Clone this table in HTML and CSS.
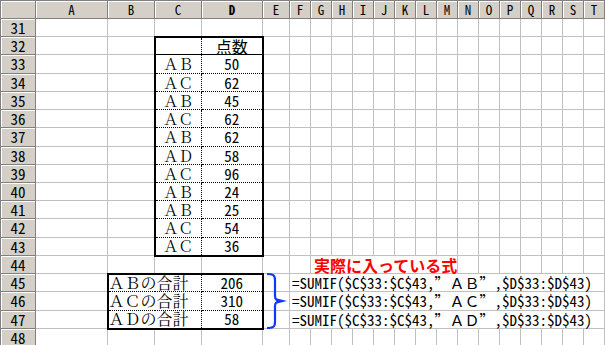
FILE: index.html
```html
<!DOCTYPE html>
<html lang="ja">
<head>
<meta charset="utf-8">
<title>SUMIF</title>
<link rel="stylesheet" href="styles.css">
</head>
<body>
<div class="wrap">
<table class="sheet">
<colgroup>
<col class="w-rh"><col class="w-a"><col class="w-b"><col class="w-c"><col class="w-d"><col class="w-e">
<col class="w-n"><col class="w-n"><col class="w-n"><col class="w-n"><col class="w-n"><col class="w-n"><col class="w-n"><col class="w-n"><col class="w-n"><col class="w-n"><col class="w-n"><col class="w-n"><col class="w-n"><col class="w-n"><col class="w-n">
</colgroup>
<tr class="hdr h18"><th></th><th>A</th><th>B</th><th>C</th><th class="sel">D</th><th>E</th><th>F</th><th>G</th><th>H</th><th>I</th><th>J</th><th>K</th><th>L</th><th>M</th><th>N</th><th>O</th><th>P</th><th>Q</th><th>R</th><th>S</th><th>T</th></tr>
<tr class="h18"><th class="rh">31</th><td></td><td></td><td></td><td></td><td></td><td></td><td></td><td></td><td></td><td></td><td></td><td></td><td></td><td></td><td></td><td></td><td></td><td></td><td></td><td></td></tr>
<tr class="h18"><th class="rh">32</th><td></td><td></td><td class="d bl bt sb"></td><td class="d br bt sb ctr kan">点数</td><td></td><td></td><td></td><td></td><td></td><td></td><td></td><td></td><td></td><td></td><td></td><td></td><td></td><td></td><td></td><td></td></tr>
<tr class="h19"><th class="rh">33</th><td></td><td></td><td class="d bl st ctr mc">ＡＢ</td><td class="d br st ctr">50</td><td></td><td></td><td></td><td></td><td></td><td></td><td></td><td></td><td></td><td></td><td></td><td></td><td></td><td></td><td></td><td></td></tr>
<tr class="h18"><th class="rh">34</th><td></td><td></td><td class="d bl ctr mc">ＡＣ</td><td class="d br ctr">62</td><td></td><td></td><td></td><td></td><td></td><td></td><td></td><td></td><td></td><td></td><td></td><td></td><td></td><td></td><td></td><td></td></tr>
<tr class="h18"><th class="rh">35</th><td></td><td></td><td class="d bl ctr mc">ＡＢ</td><td class="d br ctr">45</td><td></td><td></td><td></td><td></td><td></td><td></td><td></td><td></td><td></td><td></td><td></td><td></td><td></td><td></td><td></td><td></td></tr>
<tr class="h18"><th class="rh">36</th><td></td><td></td><td class="d bl ctr mc">ＡＣ</td><td class="d br ctr">62</td><td></td><td></td><td></td><td></td><td></td><td></td><td></td><td></td><td></td><td></td><td></td><td></td><td></td><td></td><td></td><td></td></tr>
<tr class="h19"><th class="rh">37</th><td></td><td></td><td class="d bl ctr mc">ＡＢ</td><td class="d br ctr">62</td><td></td><td></td><td></td><td></td><td></td><td></td><td></td><td></td><td></td><td></td><td></td><td></td><td></td><td></td><td></td><td></td></tr>
<tr class="h18"><th class="rh">38</th><td></td><td></td><td class="d bl ctr mc">ＡＤ</td><td class="d br ctr">58</td><td></td><td></td><td></td><td></td><td></td><td></td><td></td><td></td><td></td><td></td><td></td><td></td><td></td><td></td><td></td><td></td></tr>
<tr class="h18"><th class="rh">39</th><td></td><td></td><td class="d bl ctr mc">ＡＣ</td><td class="d br ctr">96</td><td></td><td></td><td></td><td></td><td></td><td></td><td></td><td></td><td></td><td></td><td></td><td></td><td></td><td></td><td></td><td></td></tr>
<tr class="h18"><th class="rh">40</th><td></td><td></td><td class="d bl ctr mc">ＡＢ</td><td class="d br ctr">24</td><td></td><td></td><td></td><td></td><td></td><td></td><td></td><td></td><td></td><td></td><td></td><td></td><td></td><td></td><td></td><td></td></tr>
<tr class="h18"><th class="rh">41</th><td></td><td></td><td class="d bl ctr mc">ＡＢ</td><td class="d br ctr">25</td><td></td><td></td><td></td><td></td><td></td><td></td><td></td><td></td><td></td><td></td><td></td><td></td><td></td><td></td><td></td><td></td></tr>
<tr class="h19"><th class="rh">42</th><td></td><td></td><td class="d bl ctr mc">ＡＣ</td><td class="d br ctr">54</td><td></td><td></td><td></td><td></td><td></td><td></td><td></td><td></td><td></td><td></td><td></td><td></td><td></td><td></td><td></td><td></td></tr>
<tr class="h18"><th class="rh">43</th><td></td><td></td><td class="d bl bb ctr mc">ＡＣ</td><td class="d br bb ctr">36</td><td></td><td></td><td></td><td></td><td></td><td></td><td></td><td></td><td></td><td></td><td></td><td></td><td></td><td></td><td></td><td></td></tr>
<tr class="h18"><th class="rh">44</th><td></td><td></td><td></td><td></td><td></td><td></td><td colspan="7" class="note">実際に入っている式</td><td></td><td></td><td></td><td></td><td></td><td></td><td></td></tr>
<tr class="h18"><th class="rh">45</th><td></td><td colspan="2" class="d bl bt lft mc">ＡＢの合計</td><td class="d br bt ctr">206</td><td></td><td colspan="15" class="fx">=SUMIF($C$33:$C$43,<span class="q">”</span>ＡＢ<span class="q">”</span>,$D$33:$D$43)</td></tr>
<tr class="h19"><th class="rh">46</th><td></td><td colspan="2" class="d bl lft mc">ＡＣの合計</td><td class="d br ctr">310</td><td></td><td colspan="15" class="fx">=SUMIF($C$33:$C$43,<span class="q">”</span>ＡＣ<span class="q">”</span>,$D$33:$D$43)</td></tr>
<tr class="h18"><th class="rh">47</th><td></td><td colspan="2" class="d bl bb lft mc">ＡＤの合計</td><td class="d br bb ctr">58</td><td></td><td colspan="15" class="fx">=SUMIF($C$33:$C$43,<span class="q">”</span>ＡＤ<span class="q">”</span>,$D$33:$D$43)</td></tr>
<tr class="h18"><th class="rh">48</th><td></td><td></td><td></td><td></td><td></td><td></td><td></td><td></td><td></td><td></td><td></td><td></td><td></td><td></td><td></td><td></td><td></td><td></td><td></td><td></td></tr>
</table>
<svg class="brace" width="28" height="62" viewBox="0 0 28 62">
<path d="M3,4 C9,4 11,5 11,10 L11,26 C11,29 13,31 17,31 C13,31 11,33 11,36 L11,52 C11,57 9,58 3,58" fill="none" stroke="#1238ff" stroke-width="2.2"/>
<path d="M13,28.5 L23,31 L13,33.5 Z" fill="#1238ff"/>
</svg>
</div>
</body>
</html>
```
FILE: styles.css
```css
html, body {
  margin: 0;
  padding: 0;
  background: #ffffff;
}
.wrap {
  position: relative;
  width: 605px;
  height: 345px;
  overflow: hidden;
  background: #ffffff;
}
.sheet {
  border-collapse: collapse;
  table-layout: fixed;
  width: 604px;
  font-family: "Noto Sans Mono CJK JP", "Noto Sans CJK JP", monospace;
  font-size: 15px;
  color: #000;
}
.w-rh { width: 35px; }
.w-a { width: 72px; }
.w-b { width: 47px; }
.w-c { width: 47px; }
.w-d { width: 61px; }
.w-e { width: 27px; }
.w-n { width: 21px; }
.h18 { height: 18px; }
.h19 { height: 19px; }
.sheet td, .sheet th {
  padding: 0;
  line-height: 14px;
  white-space: nowrap;
  overflow: visible;
  vertical-align: middle;
  font-weight: normal;
}
.sheet td {
  border: 1px solid #c0c0c0;
}
.sheet th {
  background: #d4d0c8;
  border: 1px solid #808080;
  box-shadow: inset 1px 1px 0 #ffffff;
  text-align: center;
}
.hdr th {
  font-size: 13px;
}
.sheet .sel {
  font-weight: bold;
}
.sheet .rh {
  font-size: 15px;
}
.sheet .d { border: 1px dotted #000; }
.sheet .sb { border-bottom: 1px solid #000; }
.sheet .st { border-top: 1px solid #000; }
.sheet .bl { border-left: 2px solid #000; }
.sheet .br { border-right: 2px solid #000; }
.sheet .bt { border-top: 2px solid #000; }
.sheet .bb { border-bottom: 2px solid #000; }
.ctr { text-align: center; }
.lft { text-align: left; padding-left: 1px; }
.sheet .mc {
  font-family: "Noto Serif CJK JP", "Noto Sans Mono CJK JP", "Noto Sans CJK JP", serif;
}
.sheet .lft {
  font-size: 16px;
}
.sheet .kan {
  font-size: 16px;
}
.q {
  font-variant-east-asian: full-width;
}
.sheet .note {
  color: #ff0000;
  font-family: "Noto Sans CJK JP", sans-serif;
  font-weight: bold;
  font-size: 16px;
  padding-left: 3px;
}
.sheet .fx {
  padding-left: 2px;
}
.brace {
  position: absolute;
  left: 264px;
  top: 270px;
}
```
